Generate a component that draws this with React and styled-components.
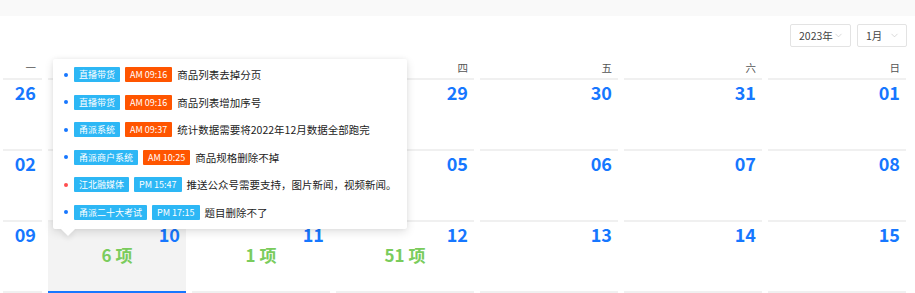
import styled, { createGlobalStyle } from "styled-components";
import { ChevronDown } from "lucide-react";

const GlobalStyle = createGlobalStyle`
  html, body { margin: 0; padding: 0; background: #fff; }
  body {
    font-family: "Noto Sans CJK SC", "Noto Sans", sans-serif;
    color: #333;
    overflow: hidden;
  }
`;

const Page = styled.div`
  position: relative;
  width: 915px;
  height: 293px;
  overflow: hidden;
  background: #fff;
`;

const TopStrip = styled.div`
  height: 16px;
  background: #f9f9f9;
`;

const Toolbar = styled.div`
  display: flex;
  justify-content: flex-end;
  gap: 6px;
  padding: 8px 8px 0 0;
`;

const Select = styled.div`
  box-sizing: border-box;
  width: ${(p) => p.$w}px;
  height: 23px;
  border: 1px solid #e3e3e3;
  border-radius: 2px;
  display: flex;
  align-items: center;
  justify-content: space-between;
  padding: 0 6px 0 8px;
  font-size: 10.5px;
  color: #444;
  white-space: nowrap;
  svg { color: #c8c8c8; flex: none; }
`;

const Grid = styled.div`
  display: grid;
  grid-template-columns: 45px repeat(6, 144px);
`;

const WeekDay = styled.div`
  text-align: right;
  padding: 12px 9px 1px 0;
  line-height: 18px;
  font-size: 10.5px;
  color: #555;
`;

const Cell = styled.div`
  margin: 0 3px;
  height: 69px;
  border-top: 2px solid ${(p) => (p.$selected ? "#1677ff" : "#f0f0f0")};
  background: ${(p) => (p.$hover ? "#f3f3f3" : "transparent")};
`;

const DateNum = styled.div`
  text-align: right;
  padding: 2px 6px 0 0;
  line-height: 20px;
  font-size: 18px;
  font-weight: 700;
  color: #1677ff;
`;

const Count = styled.div`
  text-align: center;
  line-height: 22px;
  font-size: 17px;
  font-weight: 700;
  color: #7acc5c;
`;

const Popover = styled.div`
  position: absolute;
  left: 53px;
  top: 59px;
  width: 354px;
  box-sizing: border-box;
  padding: 2px 12px 3px 11px;
  background: #fff;
  border-radius: 2px;
  box-shadow: 0 3px 10px rgba(0, 0, 0, 0.12), 0 0 4px rgba(0, 0, 0, 0.05);
  &::after {
    content: "";
    position: absolute;
    left: 10px;
    bottom: -5px;
    width: 10px;
    height: 10px;
    background: #fff;
    transform: rotate(45deg);
    box-shadow: 3px 3px 5px rgba(0, 0, 0, 0.06);
  }
`;

const Item = styled.div`
  display: flex;
  align-items: center;
  height: 27.5px;
  white-space: nowrap;
`;

const Dot = styled.i`
  flex: none;
  width: 4px;
  height: 4px;
  border-radius: 50%;
  background: ${(p) => (p.$red ? "#ff4d4f" : "#1677ff")};
  margin: 0 6px 0 0;
`;

const Tag = styled.span`
  flex: none;
  display: inline-flex;
  align-items: center;
  height: 15px;
  padding: 0 5px;
  margin-right: 5px;
  font-size: 9px;
  color: #fff;
  border-radius: 1px;
  background: ${(p) => (p.$orange ? "#ff5500" : "#2db7f5")};
`;

const Title = styled.span`
  font-size: 10.5px;
  color: #222;
`;

const weekDays = ["一", "二", "三", "四", "五", "六", "日"];
const weeks = [
  ["26", "27", "28", "29", "30", "31", "01"],
  ["02", "03", "04", "05", "06", "07", "08"],
  ["09", "10", "11", "12", "13", "14", "15"],
  ["16", "17", "18", "19", "20", "21", "22"],
];
const counts = { "10": "6 项", "11": "1 项", "12": "51 项" };

const items = [
  { tag: "直播带货", time: "AM 09:16", am: true, text: "商品列表去掉分页" },
  { tag: "直播带货", time: "AM 09:16", am: true, text: "商品列表增加序号" },
  { tag: "甬派系统", time: "AM 09:37", am: true, text: "统计数据需要将2022年12月数据全部跑完" },
  { tag: "甬派商户系统", time: "AM 10:25", am: true, text: "商品规格删除不掉" },
  { tag: "江北融媒体", time: "PM 15:47", red: true, text: "推送公众号需要支持，图片新闻，视频新闻。" },
  { tag: "甬派二十大考试", time: "PM 17:15", text: "题目删除不了" },
];

export default function App() {
  return (
    <Page>
      <GlobalStyle />
      <TopStrip />
      <Toolbar>
        <Select $w={61}>
          <span>2023年</span>
          <ChevronDown size={11} strokeWidth={1.5} />
        </Select>
        <Select $w={50}>
          <span>1月</span>
          <ChevronDown size={11} strokeWidth={1.5} />
        </Select>
      </Toolbar>
      <Grid>
        {weekDays.map((d) => (
          <WeekDay key={d}>{d}</WeekDay>
        ))}
        {weeks.map((row, ri) =>
          row.map((d) => (
            <Cell key={ri + d} $hover={d === "10"} $selected={d === "17"}>
              {ri < 3 && <DateNum>{d}</DateNum>}
              {ri === 2 && counts[d] && <Count>{counts[d]}</Count>}
            </Cell>
          ))
        )}
      </Grid>
      <Popover>
        {items.map((it, i) => (
          <Item key={i}>
            <Dot $red={it.red} />
            <Tag>{it.tag}</Tag>
            <Tag $orange={it.am}>{it.time}</Tag>
            <Title>{it.text}</Title>
          </Item>
        ))}
      </Popover>
    </Page>
  );
}
